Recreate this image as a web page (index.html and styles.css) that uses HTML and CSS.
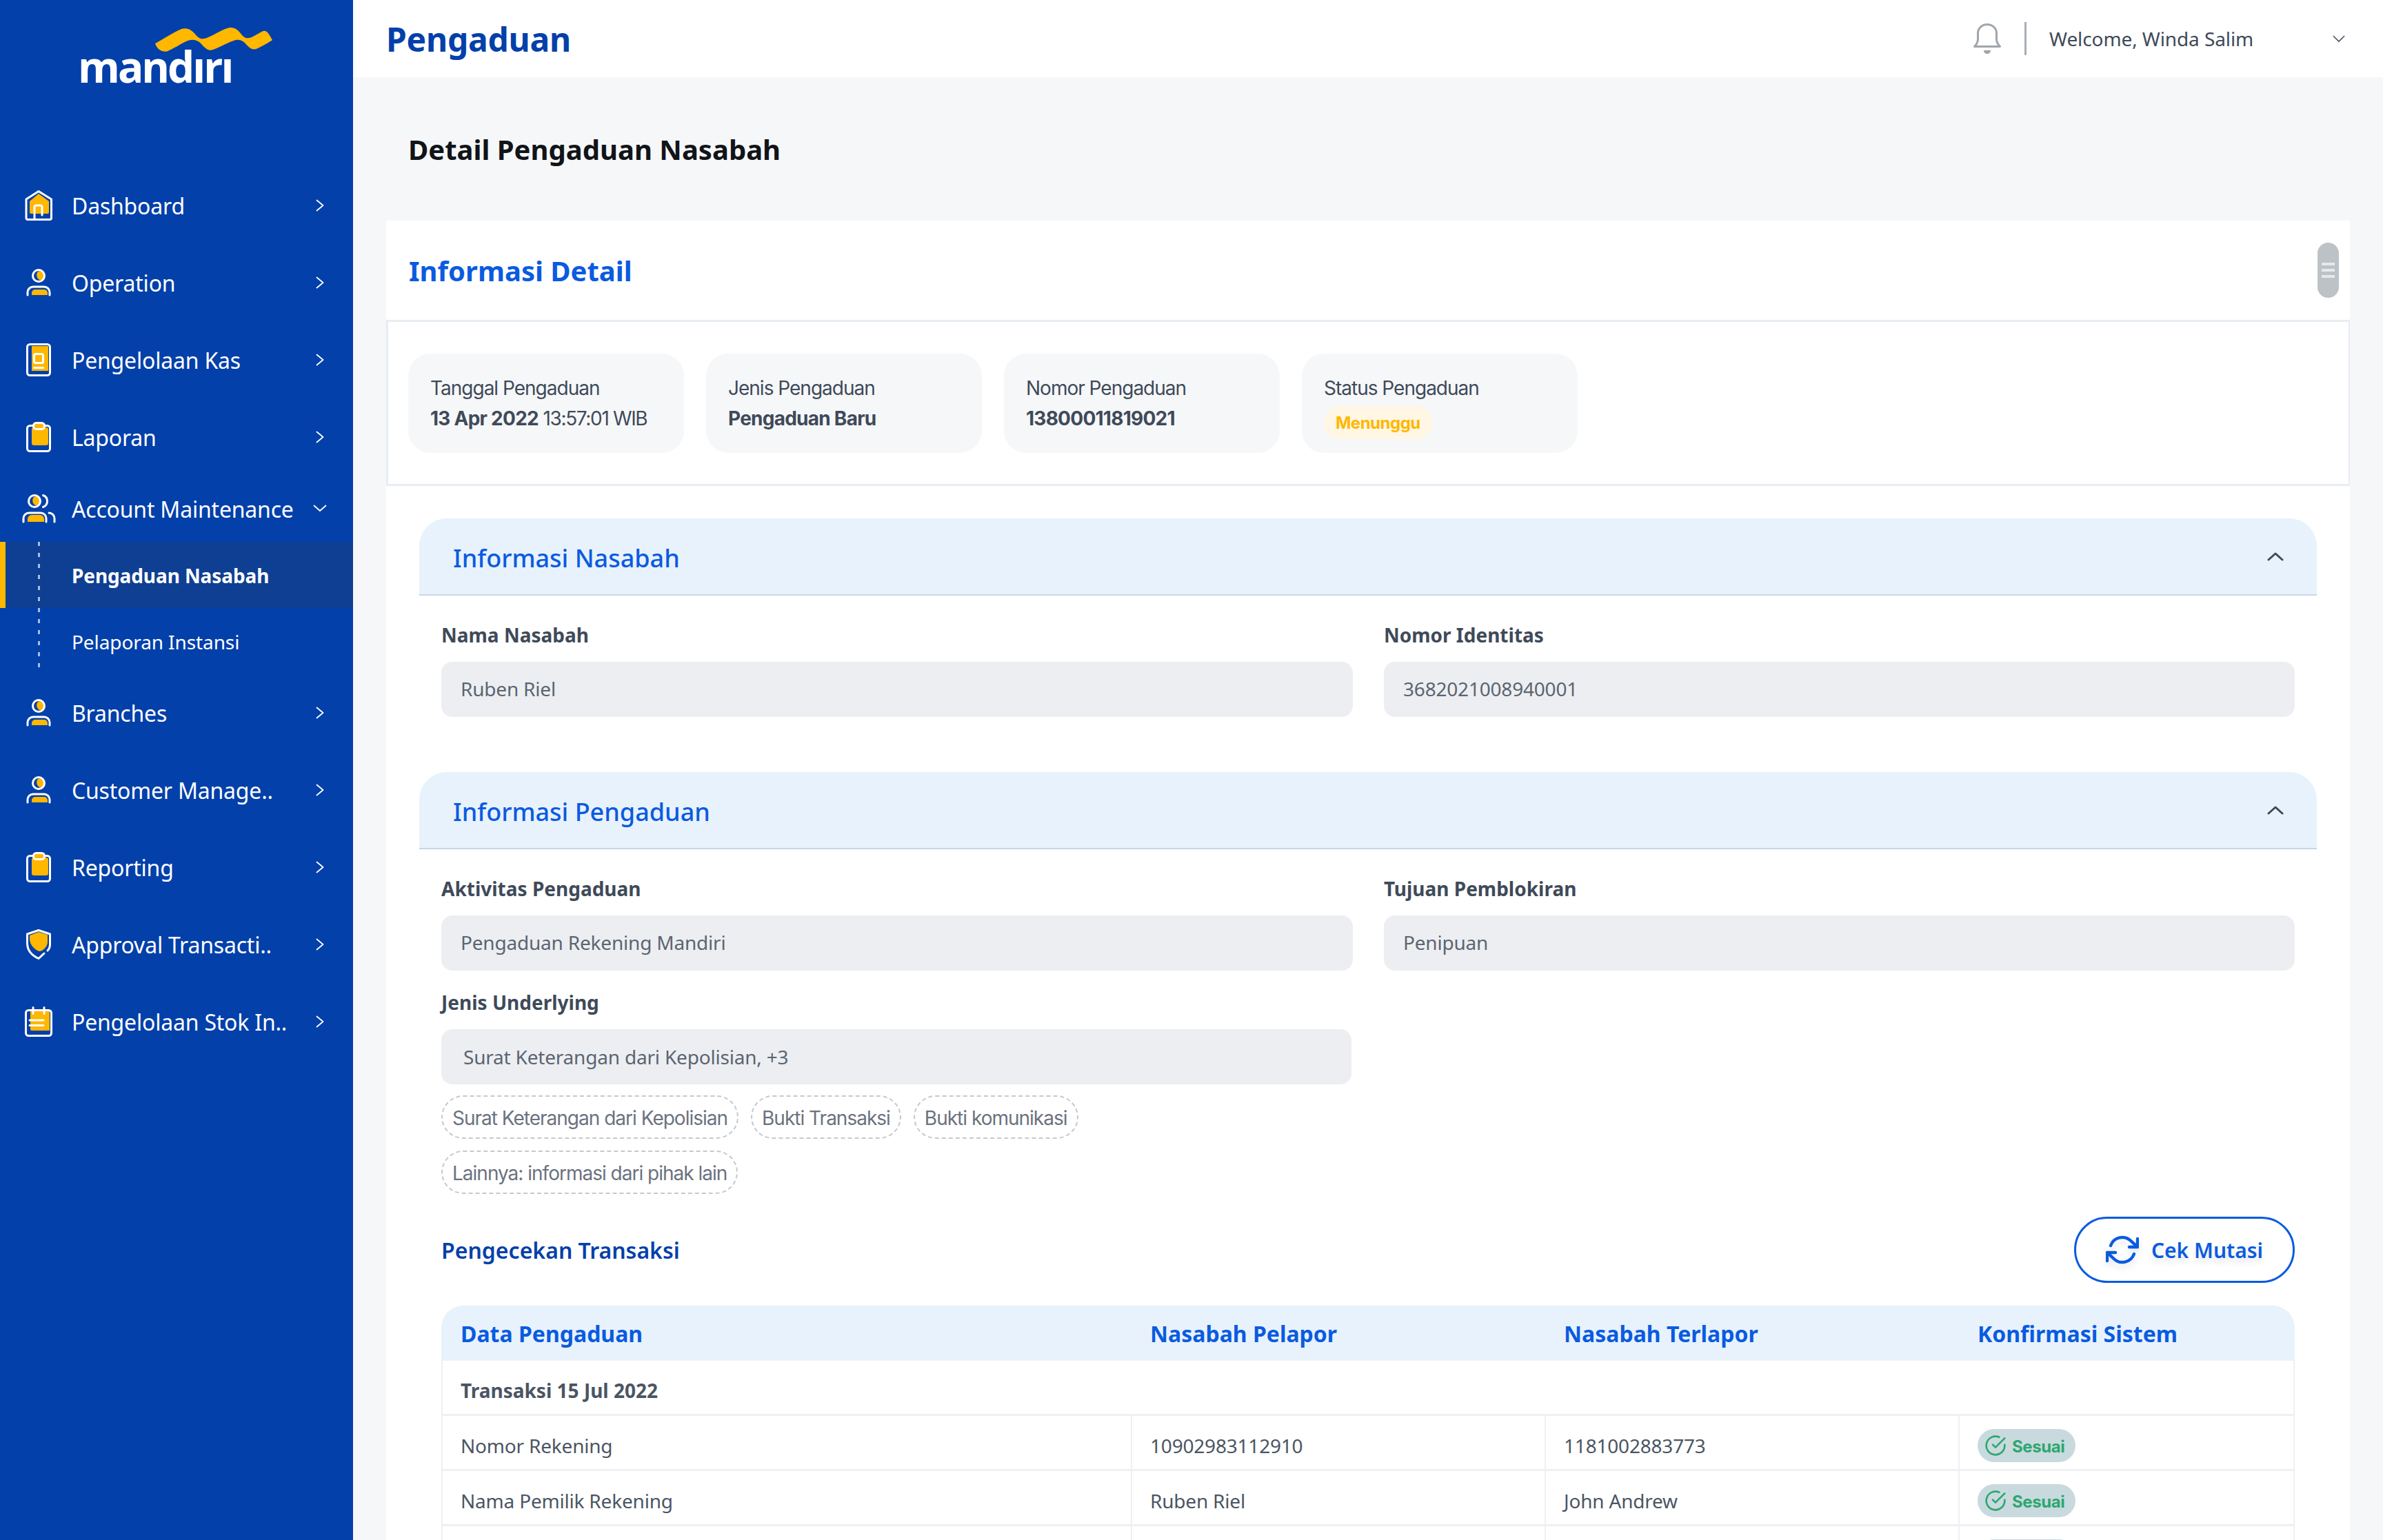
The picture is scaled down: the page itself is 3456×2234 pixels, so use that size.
FILE: index.html
```html
<!DOCTYPE html>
<html lang="id">
<head>
<meta charset="utf-8">
<title>Pengaduan</title>
<link rel="stylesheet" href="styles.css">
</head>
<body>
<svg class="sprite" xmlns="http://www.w3.org/2000/svg">
  <symbol id="i-home" viewBox="0 0 70 60">
    <path fill="#ffb700" d="M19 24L32 13l15 11v16a2 2 0 0 1-2 2H21a2 2 0 0 1-2-2z"/>
    <path fill="none" stroke="#fff" stroke-width="3" stroke-linejoin="round" d="M32 9.500L14 21v27a2.500 2.500 0 0 0 2.500 2.500H48a2.500 2.500 0 0 0 2.500-2.500V21z"/>
    <path fill="none" stroke="#fff" stroke-width="3" stroke-linecap="round" d="M26 50V32a2 2 0 0 1 2-2h7a2 2 0 0 1 2 2v12"/>
  </symbol>
  <symbol id="i-person" viewBox="0 0 70 60">
    <path fill="#ffb700" d="M31 14a6.500 6.500 0 1 1 3 12.300a8 8 0 0 1-3-12.300z"/>
    <circle cx="32" cy="20" r="8.500" fill="none" stroke="#fff" stroke-width="3"/>
    <path fill="#ffb700" d="M22 48v-3a5 5 0 0 1 5-5h13a5 5 0 0 1 5 5v3z"/>
    <path fill="none" stroke="#fff" stroke-width="3" stroke-linecap="round" d="M16 48v-4a8 8 0 0 1 8-8h16a8 8 0 0 1 8 8v4"/>
  </symbol>
  <symbol id="i-book" viewBox="0 0 70 60">
    <path fill="#ffb700" d="M22 10h24v36H22z"/>
    <rect x="15.500" y="7.500" width="33" height="45" rx="4" fill="none" stroke="#fff" stroke-width="3"/>
    <rect x="25.500" y="21.500" width="13" height="13" rx="2" fill="none" stroke="#fff" stroke-width="3"/>
    <path stroke="#fff" stroke-width="3" stroke-linecap="round" d="M25.500 41.500h13"/>
  </symbol>
  <symbol id="i-clip" viewBox="0 0 70 60">
    <rect x="22" y="16" width="24" height="26" rx="3" fill="#ffb700"/>
    <rect x="15.500" y="13.500" width="33" height="37" rx="4" fill="none" stroke="#fff" stroke-width="3"/>
    <rect x="24.500" y="9.500" width="16" height="9" rx="4" fill="#ffb700" stroke="#fff" stroke-width="3"/>
  </symbol>
  <symbol id="i-people" viewBox="0 0 70 60">
    <path fill="#ffb700" d="M25 13a6.500 6.500 0 1 1 3 12.300a8 8 0 0 1-3-12.300z"/>
    <circle cx="26" cy="19" r="8.500" fill="none" stroke="#fff" stroke-width="3"/>
    <path fill="none" stroke="#fff" stroke-width="3" stroke-linecap="round" d="M38.500 10.500a9 9 0 0 1 0 17"/>
    <path fill="#ffb700" d="M16 49v-4a6 6 0 0 1 6-6h12a6 6 0 0 1 6 6v4z"/>
    <path fill="none" stroke="#fff" stroke-width="3" stroke-linecap="round" d="M10 49v-5a8 8 0 0 1 8-8h17a8 8 0 0 1 8 8v5M47 36a8 8 0 0 1 8 8v5"/>
  </symbol>
  <symbol id="i-shield" viewBox="0 0 70 60">
    <path fill="#ffb700" d="M32 12l13 4v11c0 6-7 13-12 13-7-2-14-10-14-18v-5z"/>
    <path fill="none" stroke="#fff" stroke-width="3" stroke-linecap="round" stroke-linejoin="round" d="M40 43l-8 7.500C22 46 15.500 38 15.500 28V15L32 9.500 48.500 15v15c0 4-1.500 7-3.500 9"/>
  </symbol>
  <symbol id="i-cal" viewBox="0 0 70 60">
    <path fill="#ffb700" d="M20 13h28v30H22a2 2 0 0 1-2-2z"/>
    <rect x="13.500" y="13.500" width="37" height="37" rx="4" fill="none" stroke="#fff" stroke-width="3"/>
    <path stroke="#fff" stroke-width="3" stroke-linecap="round" d="M24 9.500v9M40 9.500v9M19 28h20M19 35.500h20"/>
  </symbol>
  <symbol id="i-chev-r" viewBox="0 0 12 18">
    <path fill="none" stroke="#fff" stroke-width="1.800" stroke-linecap="round" stroke-linejoin="round" d="M1.500 1.500L10.500 9l-9 7.500"/>
  </symbol>
  <symbol id="i-up" viewBox="0 0 24 14">
    <path fill="none" stroke="#3f4a59" stroke-width="3" stroke-linecap="round" stroke-linejoin="round" d="M2 12L12 3l10 9"/>
  </symbol>
  <symbol id="i-check" viewBox="0 0 24 24">
    <path fill="none" stroke="#2da771" stroke-width="2" stroke-linecap="round" stroke-linejoin="round" d="M22 11.080V12a10 10 0 1 1-5.930-9.140"/>
    <path fill="none" stroke="#2da771" stroke-width="2" stroke-linecap="round" stroke-linejoin="round" d="M22 4L12 14.010l-3-3"/>
  </symbol>
</svg>

<aside class="sidebar">
  <div class="logo">
    <svg class="logo-wave" viewBox="0 0 1200 420" xmlns="http://www.w3.org/2000/svg"><path fill="#ffb700" d="M495 190C540 165 575 140 610 126C635 118 655 130 675 155C690 172 705 172 725 163C760 148 790 125 820 120C845 118 860 135 875 155C890 170 905 168 925 157L960 137C975 130 985 135 1005 175C980 190 955 205 935 213C915 218 905 208 890 192C875 175 860 168 835 178C800 190 770 210 740 218C720 222 705 200 690 185C670 170 650 170 625 182C600 195 570 215 545 224C520 226 505 215 495 190Z"/></svg>
    <span class="logo-text">mandırı</span>
  </div>
  <nav class="nav">
    <a class="nav-item"><svg class="nav-ico"><use href="#i-home"/></svg><span class="nav-label">Dashboard</span><svg class="nav-chev"><use href="#i-chev-r"/></svg></a>
    <a class="nav-item"><svg class="nav-ico"><use href="#i-person"/></svg><span class="nav-label">Operation</span><svg class="nav-chev"><use href="#i-chev-r"/></svg></a>
    <a class="nav-item"><svg class="nav-ico"><use href="#i-book"/></svg><span class="nav-label">Pengelolaan Kas</span><svg class="nav-chev"><use href="#i-chev-r"/></svg></a>
    <a class="nav-item"><svg class="nav-ico"><use href="#i-clip"/></svg><span class="nav-label">Laporan</span><svg class="nav-chev"><use href="#i-chev-r"/></svg></a>
    <a class="nav-item nav-item-open"><svg class="nav-ico"><use href="#i-people"/></svg><span class="nav-label">Account Maintenance</span><svg class="nav-chev-down" viewBox="0 0 20 12"><path fill="none" stroke="#fff" stroke-width="1.800" stroke-linecap="round" stroke-linejoin="round" d="M1.500 1.500L10 9l8.500-7.500"/></svg></a>
    <div class="subnav">
      <a class="sub-item sub-item-active">Pengaduan Nasabah</a>
      <a class="sub-item">Pelaporan Instansi</a>
    </div>
    <a class="nav-item"><svg class="nav-ico"><use href="#i-person"/></svg><span class="nav-label">Branches</span><svg class="nav-chev"><use href="#i-chev-r"/></svg></a>
    <a class="nav-item"><svg class="nav-ico"><use href="#i-person"/></svg><span class="nav-label">Customer Manage..</span><svg class="nav-chev"><use href="#i-chev-r"/></svg></a>
    <a class="nav-item"><svg class="nav-ico"><use href="#i-clip"/></svg><span class="nav-label">Reporting</span><svg class="nav-chev"><use href="#i-chev-r"/></svg></a>
    <a class="nav-item"><svg class="nav-ico"><use href="#i-shield"/></svg><span class="nav-label">Approval Transacti..</span><svg class="nav-chev"><use href="#i-chev-r"/></svg></a>
    <a class="nav-item"><svg class="nav-ico"><use href="#i-cal"/></svg><span class="nav-label">Pengelolaan Stok In..</span><svg class="nav-chev"><use href="#i-chev-r"/></svg></a>
  </nav>
</aside>

<div class="main">
  <header class="topbar">
    <h1 class="topbar-title">Pengaduan</h1>
    <div class="topbar-user">
      <svg class="bell" viewBox="0 0 40 44"><path fill="none" stroke="#a0a6ac" stroke-width="3" stroke-linejoin="round" d="M1.500 33.500c3-3 5-5.500 5-11V14a13.500 12.500 0 0 1 27 0v8.500c0 5.500 2 8 5 11z"/><path fill="#a0a6ac" d="M15 39h10c0 3-2 5-5 5s-5-2-5-5z"/></svg>
      <span class="divider"></span>
      <span class="welcome">Welcome, Winda Salim</span>
      <svg class="user-chev" viewBox="0 0 20 12"><path fill="none" stroke="#4b5563" stroke-width="1.800" stroke-linecap="round" stroke-linejoin="round" d="M1.500 1.500L10 10l8.500-8.500"/></svg>
    </div>
  </header>

  <div class="content">
    <h2 class="page-title">Detail Pengaduan Nasabah</h2>
    <section class="card">
      <div class="card-head">
        <h3 class="card-title">Informasi Detail</h3>
        <div class="handle"><i></i><i></i><i></i></div>
      </div>
      <div class="tiles">
        <div class="tile"><span>Tanggal Pengaduan</span><span class="tile-value"><b>13 Apr 2022</b> 13:57:01 WIB</span></div>
        <div class="tile"><span>Jenis Pengaduan</span><span class="tile-value"><b>Pengaduan Baru</b></span></div>
        <div class="tile"><span>Nomor Pengaduan</span><span class="tile-value"><b>13800011819021</b></span></div>
        <div class="tile"><span>Status Pengaduan</span><span class="status">Menunggu</span></div>
      </div>

      <div class="sections">
        <div class="acc-head"><span>Informasi Nasabah</span><svg class="acc-chev"><use href="#i-up"/></svg></div>
        <div class="fields">
          <div class="field"><label class="field-label">Nama Nasabah</label><div class="input">Ruben Riel</div></div>
          <div class="field"><label class="field-label">Nomor Identitas</label><div class="input">3682021008940001</div></div>
        </div>

        <div class="acc-head acc-second"><span>Informasi Pengaduan</span><svg class="acc-chev"><use href="#i-up"/></svg></div>
        <div class="fields">
          <div class="field"><label class="field-label">Aktivitas Pengaduan</label><div class="input">Pengaduan Rekening Mandiri</div></div>
          <div class="field"><label class="field-label">Tujuan Pemblokiran</label><div class="input">Penipuan</div></div>
          <div class="field">
            <label class="field-label">Jenis Underlying</label>
            <div class="input input-select">Surat Keterangan dari Kepolisian, +3</div>
            <div class="chips">
              <span class="chip">Surat Keterangan dari Kepolisian</span>
              <span class="chip">Bukti Transaksi</span>
              <span class="chip">Bukti komunikasi</span>
              <span class="chip">Lainnya: informasi dari pihak lain</span>
            </div>
          </div>
        </div>

        <div class="check-head">
          <span class="check-title">Pengecekan Transaksi</span>
          <button class="btn">
            <svg class="btn-ico" viewBox="0 0 24 24"><path fill="none" stroke="#0a5be0" stroke-width="2.200" stroke-linecap="round" stroke-linejoin="round" d="M23 4v6h-6M1 20v-6h6M3.510 9a9 9 0 0 1 14.850-3.360L23 10M1 14l4.640 4.360A9 9 0 0 0 20.490 15"/></svg>
            Cek Mutasi
          </button>
        </div>

        <table class="tbl">
          <thead>
            <tr><th>Data Pengaduan</th><th>Nasabah Pelapor</th><th>Nasabah Terlapor</th><th>Konfirmasi Sistem</th></tr>
          </thead>
          <tbody>
            <tr><td class="tbl-group" colspan="4">Transaksi 15 Jul 2022</td></tr>
            <tr><td>Nomor Rekening</td><td>10902983112910</td><td>1181002883773</td><td><span class="badge"><svg class="badge-ico"><use href="#i-check"/></svg><span class="badge-text">Sesuai</span></span></td></tr>
            <tr><td>Nama Pemilik Rekening</td><td>Ruben Riel</td><td>John Andrew</td><td><span class="badge"><svg class="badge-ico"><use href="#i-check"/></svg><span class="badge-text">Sesuai</span></span></td></tr>
            <tr><td></td><td></td><td></td><td><span class="badge"><svg class="badge-ico"><use href="#i-check"/></svg><span class="badge-text">Sesuai</span></span></td></tr>
          </tbody>
        </table>
      </div>
    </section>
  </div>
</div>
</body>
</html>
```

FILE: styles.css
```css
* { box-sizing: border-box; }
html, body { margin: 0; height: 100%; overflow: hidden; }
body {
  display: flex;
  background: #f6f7f9;
  font-family: "Noto Sans", "Open Sans", sans-serif;
  color: #3f4a59;
}
.sprite { display: none; }

/* Sidebar */
.sidebar { flex: 0 0 512px; background: #0340aa; color: #fff; }
.logo { position: relative; height: 242px; }
.logo-wave { position: absolute; left: 60px; top: 0; width: 400px; height: 140px; }
.logo-text {
  position: absolute;
  left: 113px;
  top: 54px;
  font-family: "Open Sans", sans-serif;
  font-size: 62px;
  line-height: 84px;
  font-weight: 700;
  color: #fff;
  letter-spacing: -3px;
}
.nav-item { display: flex; align-items: center; height: 112px; padding-left: 24px; }
.nav-item-open { height: 96px; }
.nav-ico { width: 70px; height: 60px; flex: none; margin-right: 10px; }
.nav-label { flex: 1; font-size: 32px; letter-spacing: -0.2px; white-space: nowrap; }
.nav-chev { width: 12px; height: 18px; flex: none; margin-right: 42px; }
.nav-chev-down { width: 20px; height: 12px; flex: none; margin-right: 38px; }
.subnav { position: relative; }
.subnav::before {
  content: "";
  position: absolute;
  left: 55px;
  top: 0;
  width: 3px;
  height: 186px;
  background: repeating-linear-gradient(to bottom, #a9bde0 0 6px, transparent 6px 16px);
}
.sub-item {
  display: flex;
  align-items: center;
  height: 96px;
  padding-left: 104px;
  padding-top: 2px;
  font-size: 28px;
  letter-spacing: -0.1px;
}
.sub-item-active {
  padding-left: 96px;
  border-left: 8px solid #ffb700;
  background: #0f3f93;
  font-weight: 700;
}

/* Main */
.main { flex: 1; min-width: 0; display: flex; flex-direction: column; }
.topbar {
  flex: none;
  height: 112px;
  background: #fff;
  display: flex;
  align-items: center;
  justify-content: space-between;
  padding: 0 55px 0 48px;
}
.topbar-title { margin: 0; font-size: 48px; font-weight: 700; letter-spacing: -0.25px; color: #0340aa; }
.topbar-user { display: flex; align-items: center; }
.bell { width: 40px; height: 44px; margin-right: 34px; }
.divider { width: 3px; height: 48px; background: #a8aeb5; margin-right: 33px; }
.welcome { font-size: 28px; width: 411px; letter-spacing: -0.1px; }
.user-chev { width: 18px; height: 11px; }

.content { flex: 1; padding: 0 48px; overflow: hidden; }
.page-title {
  margin: 0;
  height: 208px;
  display: flex;
  align-items: center;
  padding-left: 32px;
  font-size: 40px;
  font-weight: 700;
  color: #111418;
}
.card { background: #fff; }
.card-head {
  height: 144px;
  display: flex;
  align-items: center;
  justify-content: space-between;
  padding: 0 16px 0 33px;
}
.card-title { margin: 0; font-size: 40px; font-weight: 700; color: #0a5be0; }
.handle {
  width: 31px;
  height: 80px;
  border-radius: 16px;
  background: #bdc2c6;
  display: flex;
  flex-direction: column;
  align-items: center;
  justify-content: center;
  gap: 5px;
}
.handle i { width: 19px; height: 4px; background: #e6e9ea; }

.tiles {
  height: 241px;
  border: 3px solid #e8edf3;
  border-right-width: 2px;
  display: flex;
  align-items: center;
  gap: 32px;
  padding: 0 29px;
}
.tile {
  width: 400px;
  height: 144px;
  padding: 30px 32px 0;
  border-radius: 32px;
  background: #f6f7f9;
  display: flex;
  flex-direction: column;
  gap: 4px;
  font-family: "Inter", sans-serif;
  font-size: 28px;
  line-height: 40px;
  letter-spacing: -1px;
  color: #3f4a59;
}
.tile-value { letter-spacing: -1.35px; }
.tile b { font-weight: 700; letter-spacing: -0.75px; }
.status {
  align-self: flex-start;
  height: 48px;
  margin-top: 2px;
  line-height: 50px;
  padding: 0 17px;
  border-radius: 24px;
  background: #fff6e4;
  color: #ffb700;
  font-size: 24px;
  font-weight: 700;
  letter-spacing: -0.5px;
}

.sections { padding: 47px 48px 0; }
.acc-head {
  height: 112px;
  display: flex;
  align-items: center;
  justify-content: space-between;
  padding: 0 48px 0 49px;
  border-radius: 40px 40px 0 0;
  border-bottom: 2px solid #c8d6e5;
  background: #e8f2fc;
  font-size: 36px;
  font-weight: 500;
  color: #0a5be0;
}
.acc-head span { padding-top: 4px; }
.acc-second { margin-top: 80px; }
.acc-chev { width: 24px; height: 14px; }
.fields {
  display: grid;
  grid-template-columns: 1322px 1321px;
  column-gap: 45px;
  row-gap: 26px;
  padding: 37px 32px 0;
}
.field-label { display: block; font-size: 28px; line-height: 40px; font-weight: 700; margin-bottom: 19px; }
.input {
  height: 80px;
  display: flex;
  align-items: center;
  padding: 0 28px 2px;
  border-radius: 16px;
  background: #edeef1;
  font-size: 28px;
  letter-spacing: -0.2px;
  color: #5a6572;
}
.input-select { padding: 0 28px 0 32px; margin-right: 2px; }
.chips { display: flex; flex-wrap: wrap; gap: 17px 18px; margin-top: 16px; }
.chip {
  height: 63px;
  display: flex;
  align-items: center;
  padding: 2px 14px 0;
  border: 2px dashed #c5c9ce;
  border-radius: 32px;
  font-family: "Inter", sans-serif;
  font-size: 28px;
  letter-spacing: -1px;
  color: #6b7280;
}

.check-head {
  display: flex;
  align-items: center;
  justify-content: space-between;
  margin: 33px 32px;
}
.check-title { font-size: 32px; font-weight: 600; color: #0340aa; }
.btn {
  width: 320px;
  height: 96px;
  display: flex;
  align-items: center;
  justify-content: center;
  gap: 18px;
  border: 3px solid #0a5be0;
  border-radius: 48px;
  background: #fff;
  font-family: "Noto Sans", sans-serif;
  font-size: 30px;
  font-weight: 600;
  color: #0a5be0;
  text-shadow: 0 6px 8px rgba(60, 70, 90, 0.14);
}
.btn-ico { width: 48px; height: 48px; filter: drop-shadow(0 6px 5px rgba(60, 70, 90, 0.14)); }

.tbl {
  width: 2688px;
  margin-left: 32px;
  table-layout: fixed;
  border-collapse: separate;
  border-spacing: 0;
  font-size: 28px;
  letter-spacing: -0.2px;
  color: #4b5563;
}
.tbl th:nth-child(1) { width: 1000px; }
.tbl th:nth-child(2), .tbl th:nth-child(3) { width: 600px; }
.tbl th {
  height: 80px;
  padding: 0 28px;
  background: #e8f2fc;
  text-align: left;
  font-size: 32px;
  font-weight: 700;
  letter-spacing: 0;
  color: #0a5be0;
}
.tbl th:first-child { border-top-left-radius: 32px; }
.tbl th:last-child { border-top-right-radius: 32px; }
.tbl td {
  height: 80px;
  padding: 8px 26px 0;
  border-bottom: 3px solid #eef0f4;
  border-left: 2px solid #eef0f4;
}
.tbl td:last-child { border-right: 2px solid #eef0f4; }
.tbl .tbl-group { font-size: 28px; font-weight: 700; letter-spacing: 0; border-right: 2px solid #eef0f4; }
.badge {
  display: inline-flex;
  align-items: center;
  gap: 8px;
  height: 48px;
  padding: 0 16px 0 10px;
  border-radius: 24px;
  background: #c9dade;
  font-family: "Inter", sans-serif;
  font-size: 24px;
  font-weight: 700;
  letter-spacing: -0.4px;
  color: #2da771;
  vertical-align: middle;
}
.badge-text { padding-top: 3px; }
.badge-ico { width: 32px; height: 32px; }
```
